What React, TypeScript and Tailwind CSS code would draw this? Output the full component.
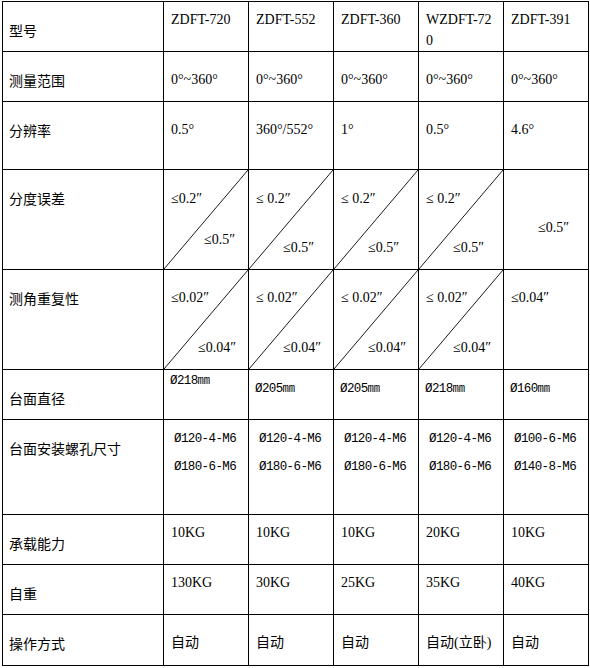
import React from "react";

const L =
  "bg-white pl-[6px] pt-[18px] text-[14px] leading-[20px] font-['Noto_Sans_CJK_SC',sans-serif] text-black";
const D =
  "bg-white pl-[7px] pr-[7px] text-[14px] leading-[20px] font-['Liberation_Serif','Noto_Sans_CJK_SC',serif] text-black break-all";
const M =
  "bg-white text-[12.5px] tracking-[-0.6px] leading-[20px] font-['Liberation_Mono','Noto_Sans_CJK_SC',monospace] text-black whitespace-nowrap";

function Slash() {
  return (
    <svg
      className="absolute inset-0 w-full h-full overflow-visible pointer-events-none"
      preserveAspectRatio="none"
    >
      <line x1="0" y1="100%" x2="100%" y2="0" stroke="#000" strokeWidth="0.9" />
    </svg>
  );
}

function Diag({
  first,
  second,
  secondCls,
  firstCls,
}: {
  first: string;
  second: string;
  firstCls: string;
  secondCls: string;
}) {
  return (
    <div className={D + " relative"}>
      <Slash />
      <div className={firstCls}>{first}</div>
      <div className={secondCls}>{second}</div>
    </div>
  );
}

export default function App() {
  const models = ["ZDFT-720", "ZDFT-552", "ZDFT-360", "WZDFT-720", "ZDFT-391"];
  const range = ["0°~360°", "0°~360°", "0°~360°", "0°~360°", "0°~360°"];
  const res = ["0.5°", "360°/552°", "1°", "0.5°", "4.6°"];
  const load = ["10KG", "10KG", "10KG", "20KG", "10KG"];
  const weight = ["130KG", "30KG", "25KG", "35KG", "40KG"];
  const op = ["自动", "自动", "自动", "自动(立卧)", "自动"];
  const holes = [
    ["Ø120-4-M6", "Ø180-6-M6"],
    ["Ø120-4-M6", "Ø180-6-M6"],
    ["Ø120-4-M6", "Ø180-6-M6"],
    ["Ø120-4-M6", "Ø180-6-M6"],
    ["Ø100-6-M6", "Ø140-8-M6"],
  ];

  return (
    <div className="bg-white w-[590px] h-[668px] pt-[1px] pl-[2px]">
      <div className="w-fit bg-black p-px grid gap-px grid-cols-[160px_84px_84px_84px_84px_84px] grid-rows-[49px_49px_67px_99px_99px_49px_94px_49px_49px_50px]">
        {/* Row 1 */}
        <div className={L}>型号</div>
        {models.map((m, i) => (
          <div key={"m" + i} className={D + " pt-[6.5px] leading-[21px]"}>
            {m}
          </div>
        ))}

        {/* Row 2 */}
        <div className={L}>测量范围</div>
        {range.map((m, i) => (
          <div key={"r" + i} className={D + " pt-[17.5px]"}>
            {m}
          </div>
        ))}

        {/* Row 3 */}
        <div className={L}>分辨率</div>
        {res.map((m, i) => (
          <div key={"s" + i} className={D + " pt-[18px]"}>
            {m}
          </div>
        ))}

        {/* Row 4 */}
        <div className={L}>分度误差</div>
        <Diag
          first="≤0.2″"
          second="≤0.5″"
          firstCls="relative pt-[18.5px]"
          secondCls="relative pl-[33px] mt-[21.5px]"
        />
        <Diag
          first="≤ 0.2″"
          second="≤0.5″"
          firstCls="relative pt-[18.5px]"
          secondCls="relative pl-[27px] mt-[29.5px]"
        />
        <Diag
          first="≤ 0.2″"
          second="≤0.5″"
          firstCls="relative pt-[18.5px]"
          secondCls="relative pl-[27px] mt-[29.5px]"
        />
        <Diag
          first="≤ 0.2″"
          second="≤0.5″"
          firstCls="relative pt-[18.5px]"
          secondCls="relative pl-[27px] mt-[29.5px]"
        />
        <div className={D + " pl-[34px] pt-[47.5px]"}>≤0.5″</div>

        {/* Row 5 */}
        <div className={L}>测角重复性</div>
        <Diag
          first="≤0.02″"
          second="≤0.04″"
          firstCls="relative pt-[17.5px]"
          secondCls="relative pl-[27px] mt-[30px]"
        />
        <Diag
          first="≤ 0.02″"
          second="≤0.04″"
          firstCls="relative pt-[17.5px]"
          secondCls="relative pl-[27px] mt-[30px]"
        />
        <Diag
          first="≤ 0.02″"
          second="≤0.04″"
          firstCls="relative pt-[17.5px]"
          secondCls="relative pl-[27px] mt-[30px]"
        />
        <Diag
          first="≤ 0.02″"
          second="≤0.04″"
          firstCls="relative pt-[17.5px]"
          secondCls="relative pl-[27px] mt-[30px]"
        />
        <div className={D + " pt-[17.5px]"}>≤0.04″</div>

        {/* Row 6 */}
        <div className={L}>台面直径</div>
        <div className={M + " pl-[6px] pt-[1px]"}>Ø218㎜</div>
        <div className={M + " pl-[6px] pt-[9px]"}>Ø205㎜</div>
        <div className={M + " pl-[6px] pt-[9px]"}>Ø205㎜</div>
        <div className={M + " pl-[6px] pt-[9px]"}>Ø218㎜</div>
        <div className={M + " pl-[6px] pt-[9px]"}>Ø160㎜</div>

        {/* Row 7 */}
        <div className={L}>台面安装螺孔尺寸</div>
        {holes.map((h, i) => (
          <div key={"h" + i} className={M + " pl-[10px] pt-[9px] flex flex-col gap-[8px]"}>
            <div>{h[0]}</div>
            <div>{h[1]}</div>
          </div>
        ))}

        {/* Row 8 */}
        <div className={L}>承载能力</div>
        {load.map((m, i) => (
          <div key={"l" + i} className={D + " pt-[8px]"}>
            {m}
          </div>
        ))}

        {/* Row 9 */}
        <div className={L}>自重</div>
        {weight.map((m, i) => (
          <div key={"w" + i} className={D + " pt-[8px]"}>
            {m}
          </div>
        ))}

        {/* Row 10 */}
        <div className={L}>操作方式</div>
        {op.map((m, i) => (
          <div key={"o" + i} className={D + " pt-[18px] whitespace-nowrap"}>
            {m}
          </div>
        ))}
      </div>
    </div>
  );
}
